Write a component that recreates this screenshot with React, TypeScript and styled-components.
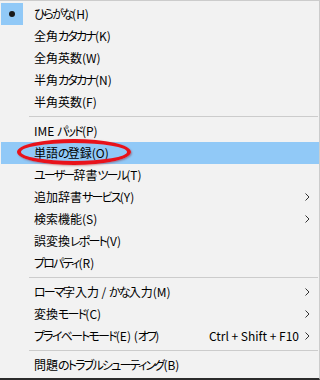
import styled, {createGlobalStyle} from 'styled-components';

const GlobalStyle = createGlobalStyle`
  html, body {
    margin: 0;
    padding: 0;
    background: #f2f2f2;
  }
`;

const Menu = styled.div`
  box-sizing: border-box;
  width: 320px;
  height: 380px;
  background: #f2f2f2;
  border-top: 1px solid #cccccc;
  border-right: 1px solid #cccccc;
  border-bottom: 2px solid #2b2b2b;
  padding: 2px 0 0 1px;
  display: flex;
  flex-direction: column;
  font-family: "Noto Sans CJK JP", "Liberation Sans", sans-serif;
  font-feature-settings: "palt";
  font-size: 12px;
  color: #000;
`;

const Item = styled.div<{ $active?: boolean }>`
  position: relative;
  height: 22px;
  display: grid;
  grid-template-columns: 22px 1fr auto 20px;
  align-items: center;
  background: ${p => (p.$active ? '#91c9f7' : 'transparent')};
`;

const CheckSlot = styled.div<{ $on?: boolean }>`
  width: 22px;
  height: 22px;
  display: flex;
  align-items: center;
  justify-content: center;
  background: ${p => (p.$on ? '#91c9f7' : 'transparent')};
  &::after {
    content: '';
    display: ${p => (p.$on ? 'block' : 'none')};
    width: 6px;
    height: 6px;
    border-radius: 50%;
    background: #1a1a1a;
  }
`;

const Label = styled.span`
  padding-left: 11px;
  white-space: nowrap;
  line-height: 22px;
`;

// kana in the menu font are narrower than kanji
const Kana = styled.span`
  letter-spacing: -1.8px;
`;

const Shortcut = styled.span`
  white-space: nowrap;
  line-height: 22px;
`;

const Arrow = styled.div`
  display: flex;
  align-items: center;
  padding-left: 6px;
  height: 22px;
`;

const Separator = styled.div`
  height: 7px;
  display: flex;
  align-items: center;
  padding: 0 1px 0 28px;
  &::after {
    content: '';
    flex: 1;
    height: 1px;
    background: #cccccc;
  }
`;

const Circle = styled.div`
  position: absolute;
  left: 16px;
  top: -3px;
  width: 106px;
  height: 18px;
  border: 4px solid #e8121a;
  border-radius: 50%;
  box-shadow: 1px 1px 2px rgba(120, 0, 0, 0.35);
  pointer-events: none;
`;

const Chevron = () => (
  <svg width="5" height="8" viewBox="0 0 5 8">
    <polyline points="0.5,0.5 4,4 0.5,7.5" fill="none" stroke="#333" strokeWidth="1" />
  </svg>
);

const withKana = (text: string) =>
  text.split(/([\u3040-\u30ff]+)/).map((part, i) =>
    /[\u3040-\u30ff]/.test(part) ? <Kana key={i}>{part}</Kana> : part
  );

type Entry =
  | { sep: true }
  | { sep?: false; label: string; checked?: boolean; sub?: boolean; shortcut?: string; active?: boolean; marked?: boolean };

const entries: Entry[] = [
  { label: 'ひらがな(H)', checked: true },
  { label: '全角カタカナ(K)' },
  { label: '全角英数(W)' },
  { label: '半角カタカナ(N)' },
  { label: '半角英数(F)' },
  { sep: true },
  { label: 'IME パッド(P)' },
  { label: '単語の登録(O)', active: true, marked: true },
  { label: 'ユーザー辞書ツール(T)' },
  { label: '追加辞書サービス(Y)', sub: true },
  { label: '検索機能(S)', sub: true },
  { label: '誤変換レポート(V)' },
  { label: 'プロパティ(R)' },
  { sep: true },
  { label: 'ローマ字入力 / かな入力(M)', sub: true },
  { label: '変換モード(C)', sub: true },
  { label: 'プライベートモード(E) (オフ)', sub: true, shortcut: 'Ctrl + Shift + F10' },
  { sep: true },
  { label: '問題のトラブルシューティング(B)' },
];

const App = () => {
  return (
    <>
      <GlobalStyle />
      <Menu>
        {entries.map((e, i) => {
          if (e.sep) return <Separator key={i} />;
          return (
            <Item key={i} $active={e.active}>
              <CheckSlot $on={e.checked} />
              <Label>{withKana(e.label)}</Label>
              <Shortcut>{e.shortcut}</Shortcut>
              <Arrow>{e.sub && <Chevron />}</Arrow>
              {e.marked && <Circle />}
            </Item>
          );
        })}
      </Menu>
    </>
  );
};

export default App;
